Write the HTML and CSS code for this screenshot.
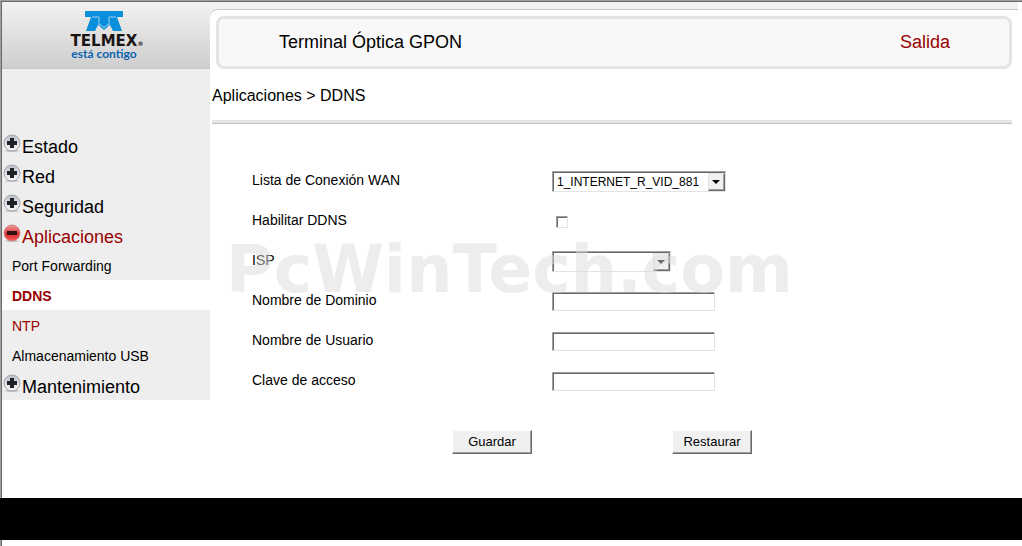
FILE: index.html
```html
<!doctype html>
<html lang="es">
<head>
    <meta charset="utf-8">
    <meta name="viewport" content="width=device-width, initial-scale=1">
    <title>Terminal Óptica GPON</title>
    <link rel="stylesheet" href="styles.css">
</head>
<body>
    <svg class="defs" width="0" height="0" aria-hidden="true">
        <defs>
            <linearGradient id="silver" x1="0" y1="0" x2="0" y2="1">
                <stop offset="0" stop-color="#b9bdc6"/>
                <stop offset="0.5" stop-color="#dcdfe8"/>
                <stop offset="1" stop-color="#f8f8fa"/>
            </linearGradient>
            <linearGradient id="red" x1="0" y1="0" x2="0" y2="1">
                <stop offset="0" stop-color="#f3a0a0"/>
                <stop offset="0.45" stop-color="#df4648"/>
                <stop offset="0.5" stop-color="#d6282b"/>
                <stop offset="1" stop-color="#ff5a5a"/>
            </linearGradient>
            <symbol id="plus" viewBox="0 0 20 20">
                <ellipse cx="10" cy="17" rx="7" ry="1" fill="#c4c4c4"/>
                <circle cx="10" cy="9" r="8" fill="url(#silver)" stroke="#a4a6ab"/>
                <path d="M8 4h4v3h3v4h-3v3H8v-3H5V7h3z" fill="#202124"/>
            </symbol>
            <symbol id="minus" viewBox="0 0 20 20">
                <ellipse cx="10" cy="17" rx="7" ry="1" fill="#c4c4c4"/>
                <circle cx="10" cy="9" r="8" fill="url(#red)" stroke="#c88a8c"/>
                <path d="M5 7h10v4H5z" fill="#301214"/>
            </symbol>
        </defs>
    </svg>
    <div class="window">
        <div class="frame">
            <div class="page">
                <aside class="sidebar">
                    <div class="logo">
                        <svg width="38" height="20" viewBox="0 0 38 20" aria-hidden="true">
                            <path d="M0 0h38v6h-6l5 14h-9l-3-6-6 5-6-5-3 6H1L6 6H0z" fill="#0a8fdc"/>
                            <path d="M7 6h7v8h2l3 3 3-3h2V6h7" fill="none" stroke="#9fd0ee"/>
                        </svg>
                        <div class="brand">TELMEX<span class="reg">®</span></div>
                        <div class="slogan">está contigo</div>
                    </div>
                    <nav class="menu">
                        <a class="group" href="#"><svg class="icon"><use href="#plus"/></svg>Estado</a>
                        <a class="group" href="#"><svg class="icon"><use href="#plus"/></svg>Red</a>
                        <a class="group" href="#"><svg class="icon"><use href="#plus"/></svg>Seguridad</a>
                        <a class="group open" href="#"><svg class="icon"><use href="#minus"/></svg>Aplicaciones</a>
                        <a class="item" href="#">Port Forwarding</a>
                        <a class="item active" href="#">DDNS</a>
                        <a class="item hover" href="#">NTP</a>
                        <a class="item" href="#">Almacenamiento USB</a>
                        <a class="group" href="#"><svg class="icon"><use href="#plus"/></svg>Mantenimiento</a>
                    </nav>
                </aside>
                <main class="main">
                    <div class="content">
                        <header class="banner">
                            <span>Terminal Óptica GPON</span>
                            <a href="#">Salida</a>
                        </header>
                        <div class="path">Aplicaciones &gt; DDNS</div>
                        <form class="ddns">
                            <div class="row">
                                <label for="wan">Lista de Conexión WAN</label>
                                <div class="select wide">
                                    <select id="wan">
                                        <option>1_INTERNET_R_VID_881</option>
                                    </select>
                                </div>
                            </div>
                            <div class="row">
                                <label for="enable">Habilitar DDNS</label>
                                <input type="checkbox" id="enable">
                            </div>
                            <div class="row">
                                <label for="isp">ISP</label>
                                <div class="select">
                                    <select id="isp">
                                        <option></option>
                                    </select>
                                </div>
                            </div>
                            <div class="row">
                                <label for="domain">Nombre de Dominio</label>
                                <input type="text" id="domain">
                            </div>
                            <div class="row">
                                <label for="user">Nombre de Usuario</label>
                                <input type="text" id="user">
                            </div>
                            <div class="row">
                                <label for="password">Clave de acceso</label>
                                <input type="password" id="password">
                            </div>
                            <div class="buttons">
                                <button type="submit">Guardar</button>
                                <button type="reset">Restaurar</button>
                            </div>
                            <div class="watermark">PcWinTech.com</div>
                        </form>
                    </div>
                </main>
            </div>
            <div class="footer"></div>
        </div>
    </div>
</body>
</html>
```

FILE: styles.css
```css
*,
*::before,
*::after {
    box-sizing: border-box;
}
body {
    margin: 0;
    background: #fff;
    color: #000;
    font-family: "Liberation Sans", Arial, sans-serif;
    font-size: 14px;
}
a {
    color: inherit;
    text-decoration: none;
}
.defs {
    position: absolute;
}
.window {
    display: flex;
    min-height: 100vh;
    border-top: 1px solid #a0a0a0;
    border-left: 1px solid #a0a0a0;
}
.frame {
    flex: 1;
    border-top: 1px solid #696969;
    border-left: 1px solid #696969;
}
.page {
    display: flex;
    align-items: flex-start;
    padding-right: 4px;
}

/* sidebar */
.sidebar {
    flex: 0 0 208px;
    background: #eee;
}
.logo {
    display: flex;
    flex-direction: column;
    align-items: center;
    height: 67px;
    padding: 9px 4px 0 0;
    border-bottom: 1px solid #c8c8c8;
    background: linear-gradient(#f3f2f1, #cecece);
}
.brand {
    position: relative;
    margin-top: 3px;
    color: #1a1414;
    font: bold 15px/14px "DejaVu Sans", sans-serif;
}
.reg {
    position: absolute;
    left: 100%;
    top: 3px;
    font-size: 6px;
}
.slogan {
    color: #0a62ae;
    font: bold 12px/12px Lato, sans-serif;
}
.menu {
    padding-top: 61px;
}
.group,
.item {
    display: block;
    height: 30px;
    line-height: 32px;
}
.group {
    display: flex;
    font-size: 18px;
    line-height: 34px;
}
.icon {
    flex: none;
    width: 20px;
    height: 20px;
    margin-top: 4px;
}
.item {
    padding-left: 10px;
}
.open,
.active,
.hover {
    color: #900;
}
.active {
    background: #fff;
    font-weight: bold;
}

/* content */
.main {
    flex: 1;
    padding-top: 7px;
    background: linear-gradient(#f3f2f1, #efeeed) no-repeat 0 0 / 100% 20px;
}
.content {
    min-height: 489px;
    padding: 6px 6px 0 2px;
    border-top: 1px solid #c4c4c4;
    border-top-left-radius: 8px;
    background: #fff;
}
.banner {
    display: flex;
    justify-content: space-between;
    align-items: center;
    height: 53px;
    margin-left: 4px;
    padding: 0 59px 0 60px;
    border: 3px solid #e5e3e4;
    border-radius: 8px;
    background: #f8f8f8;
    font-size: 18px;
}
.banner a {
    color: #900;
}
.path {
    height: 55px;
    border-bottom: 1px solid #c0c0c0;
    box-shadow: inset 0 -3px #e5e5e5;
    font-size: 16px;
    line-height: 53px;
}
.ddns {
    position: relative;
    padding: 36px 0 0 40px;
}
.row {
    display: flex;
    align-items: center;
    height: 40px;
}
.row label {
    flex: 0 0 300px;
}
select,
input {
    appearance: none;
    margin: 0;
    border: 1px solid;
    border-color: #a0a0a0 #e3e3e3 #e3e3e3 #a0a0a0;
    border-radius: 0;
    box-shadow: inset 1px 1px #696969;
    background: #fff;
    color: #000;
    font: 12px "Liberation Sans", Arial, sans-serif;
}
input[type="text"],
input[type="password"] {
    width: 163px;
    height: 19px;
    margin-top: 3px;
}
input[type="checkbox"] {
    width: 12px;
    height: 12px;
    margin: 4px 0 0 4px;
}
.select {
    position: relative;
    width: 119px;
    margin-top: 3px;
}
.select.wide {
    width: 174px;
}
.select select {
    display: block;
    width: 100%;
    height: 21px;
    padding: 1px 0 0 4px;
}
/* drop-down arrow */
.select::before {
    content: "";
    position: absolute;
    right: 1px;
    top: 2px;
    width: 17px;
    height: 18px;
    border: 1px solid;
    border-color: #e3e3e3 #696969 #696969 #e3e3e3;
    box-shadow: inset -1px -1px #a0a0a0;
    background: #f0f0f0;
    pointer-events: none;
}
.select::after {
    content: "";
    position: absolute;
    right: 6px;
    top: 9px;
    border: 4px solid transparent;
    border-top-color: #000;
    border-bottom: 0;
    pointer-events: none;
}
.buttons {
    display: flex;
    gap: 140px;
    padding: 30px 0 0 200px;
}
button {
    width: 80px;
    height: 24px;
    padding: 0 0 2px;
    border: 1px solid;
    border-color: #fff #696969 #696969 #fff;
    box-shadow: inset -1px -1px #a0a0a0;
    background: #f0f0f0;
    color: #000;
    font: 13px "Liberation Sans", Arial, sans-serif;
}
.watermark {
    position: absolute;
    left: 14px;
    top: 108px;
    color: rgba(220, 220, 220, 0.5);
    font: bold 65px/76px "DejaVu Sans", sans-serif;
    pointer-events: none;
}
.footer {
    height: 42px;
    margin-left: -2px;
    background: #000;
}
```
